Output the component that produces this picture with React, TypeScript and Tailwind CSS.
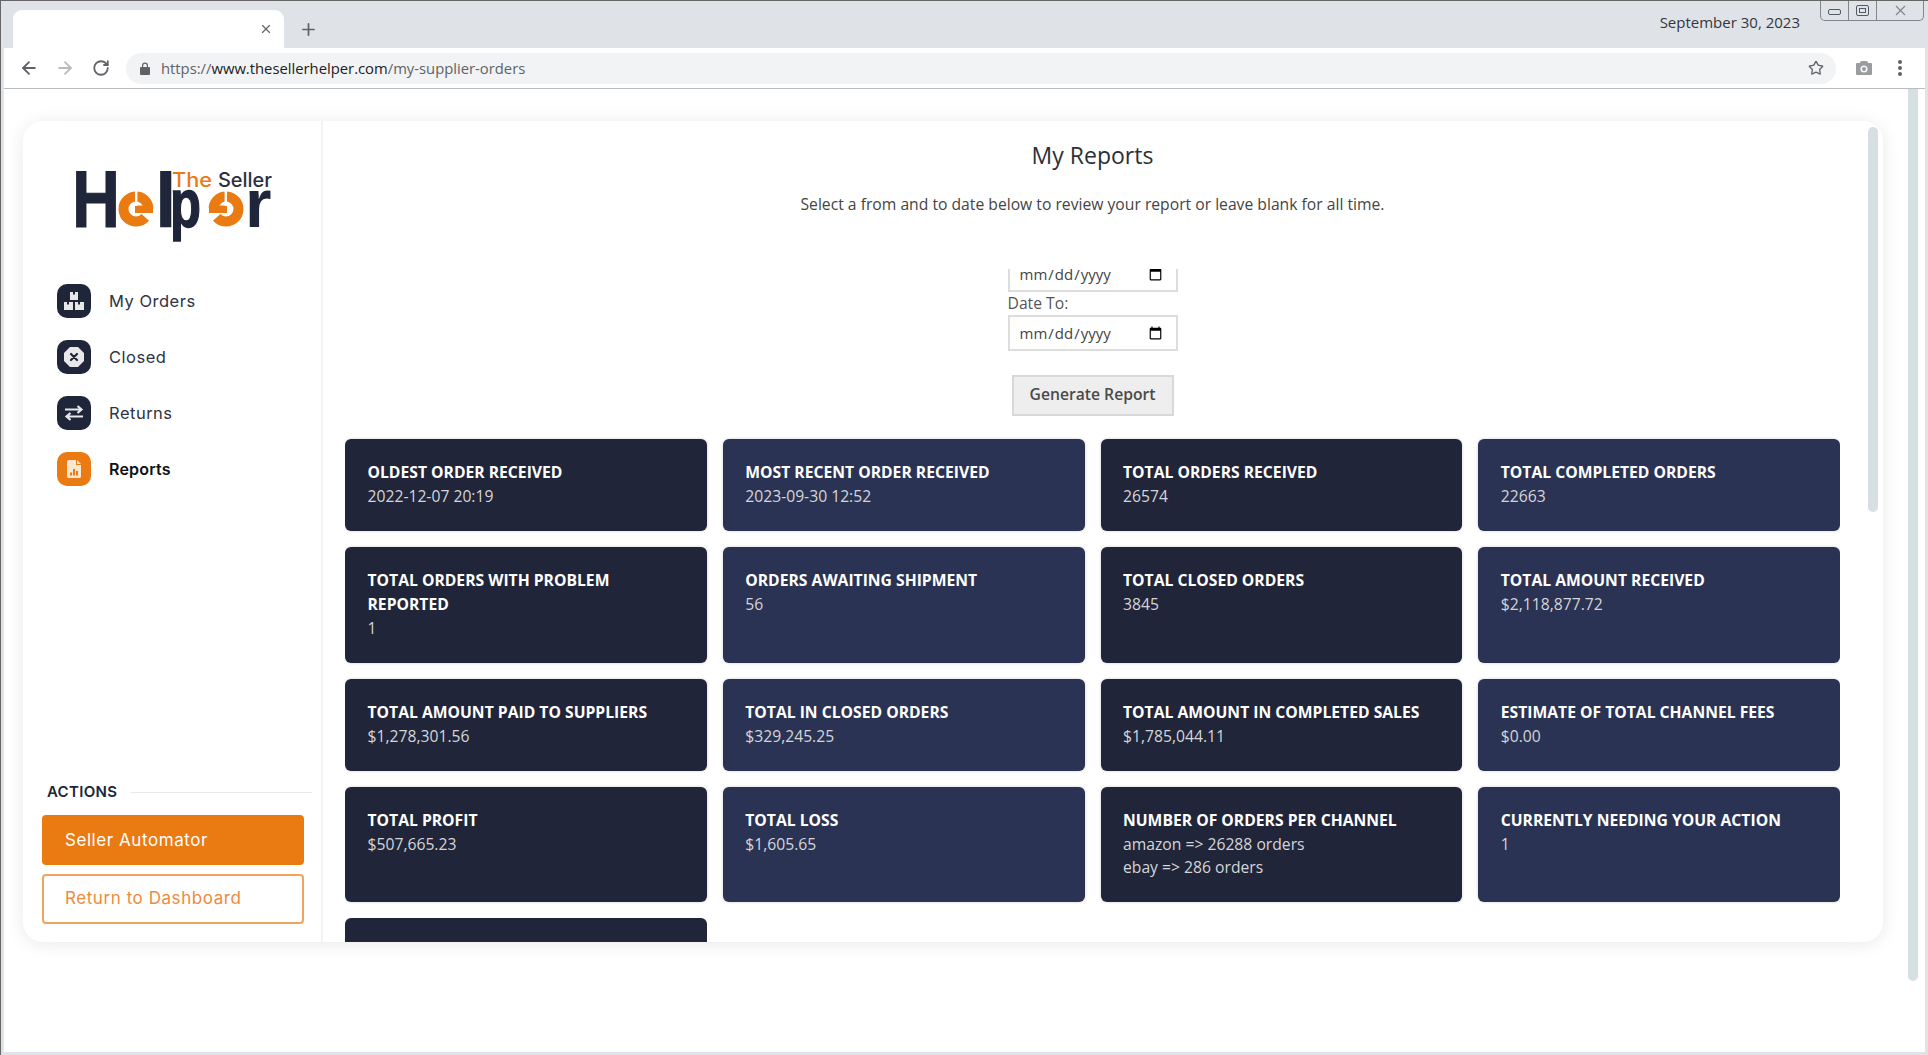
import React from "react";
import { ArrowLeft, ArrowRight, RotateCw, Star, X, Plus } from "lucide-react";

const cards: { t: string; v: string[]; dark: boolean }[] = [
  { t: "OLDEST ORDER RECEIVED", v: ["2022-12-07 20:19"], dark: true },
  { t: "MOST RECENT ORDER RECEIVED", v: ["2023-09-30 12:52"], dark: false },
  { t: "TOTAL ORDERS RECEIVED", v: ["26574"], dark: true },
  { t: "TOTAL COMPLETED ORDERS", v: ["22663"], dark: false },
  { t: "TOTAL ORDERS WITH PROBLEM REPORTED", v: ["1"], dark: true },
  { t: "ORDERS AWAITING SHIPMENT", v: ["56"], dark: false },
  { t: "TOTAL CLOSED ORDERS", v: ["3845"], dark: true },
  { t: "TOTAL AMOUNT RECEIVED", v: ["$2,118,877.72"], dark: false },
  { t: "TOTAL AMOUNT PAID TO SUPPLIERS", v: ["$1,278,301.56"], dark: true },
  { t: "TOTAL IN CLOSED ORDERS", v: ["$329,245.25"], dark: false },
  { t: "TOTAL AMOUNT IN COMPLETED SALES", v: ["$1,785,044.11"], dark: true },
  { t: "ESTIMATE OF TOTAL CHANNEL FEES", v: ["$0.00"], dark: false },
  { t: "TOTAL PROFIT", v: ["$507,665.23"], dark: true },
  { t: "TOTAL LOSS", v: ["$1,605.65"], dark: false },
  { t: "NUMBER OF ORDERS PER CHANNEL", v: ["amazon => 26288 orders", "ebay => 286 orders"], dark: true },
  { t: "CURRENTLY NEEDING YOUR ACTION", v: ["1"], dark: false },
];

function LogoE() {
  return (
    <g>
      <circle cx="61" cy="38" r="12.5" fill="none" stroke="#ea7a12" strokeWidth="10" strokeDasharray="68 10.5" transform="rotate(42 61 38)" />
      <rect x="60" y="34.5" width="18" height="7.5" fill="#ea7a12" />
      <rect x="60" y="19" width="2.4" height="16" fill="#ffffff" />
    </g>
  );
}

function Logo() {
  const sans = "'Liberation Sans', Arial, sans-serif";
  const dark = "#20263a";
  return (
    <svg width="210" height="80" viewBox="-5 0 210 80" className="block">
      <text x="-3" y="56" fontFamily={sans} fontWeight="700" fontSize="81" fill={dark} stroke={dark} strokeWidth="1" textLength="48" lengthAdjust="spacingAndGlyphs">H</text>
      <LogoE />
      <text x="79.5" y="56" fontFamily={sans} fontWeight="700" fontSize="81" fill={dark}>l</text>
      <text x="95" y="56" fontFamily={sans} fontWeight="700" fontSize="68" fill={dark} stroke={dark} strokeWidth="1.4" textLength="31" lengthAdjust="spacingAndGlyphs">p</text>
      <g transform="translate(212 0) scale(-1 1)">
        <LogoE />
      </g>
      <text x="170" y="56" fontFamily={sans} fontWeight="700" fontSize="68" fill={dark}>r</text>
      <text x="97" y="16" fontFamily="Inter, sans-serif" fontSize="19.5" fontWeight="500" fill="#ea7a12" textLength="40" lengthAdjust="spacingAndGlyphs">The</text>
      <text x="143" y="16" fontFamily="Inter, sans-serif" fontSize="19.5" fontWeight="500" fill="#2b3040" textLength="54" lengthAdjust="spacingAndGlyphs">Seller</text>
    </svg>
  );
}

function BoxesIcon() {
  return (
    <svg width="20" height="18" viewBox="0 0 20 18" fill="#e8e8ea">
      <path d="M6 0h3v2.5h2V0h3v8H6z" />
      <path d="M0 10h3v2.5h2V10h4v8H0z" />
      <path d="M11 10h3v2.5h2V10h4v8h-9z" />
    </svg>
  );
}
function ClosedIcon() {
  return (
    <svg width="20" height="20" viewBox="0 0 20 20">
      <path d="M6 0h8l6 6v8l-6 6H6l-6-6V6z" fill="#e8e8ea" />
      <path d="M7 7l6 6M13 7l-6 6" stroke="#20263a" strokeWidth="2.2" strokeLinecap="round" />
    </svg>
  );
}
function SwapIcon() {
  return (
    <svg width="20" height="16" viewBox="0 0 20 16" fill="none" stroke="#e8e8ea" strokeWidth="2.2">
      <path d="M1 4.5h16M13.5 1l4 3.5-4 3.5" />
      <path d="M19 11.5H3M6.5 8l-4 3.5 4 3.5" />
    </svg>
  );
}
function ReportIcon() {
  return (
    <svg width="14" height="18" viewBox="0 0 14 18">
      <path d="M0 1.5A1.5 1.5 0 0 1 1.5 0H9v5h5v11.5a1.5 1.5 0 0 1-1.5 1.5h-11A1.5 1.5 0 0 1 0 16.5z" fill="#fbe6d0" />
      <path d="M10 0l4 4h-4z" fill="#fbe6d0" />
      <rect x="3" y="12.5" width="2" height="3" fill="#ea7a12" />
      <rect x="6" y="9" width="2" height="6.5" fill="#ea7a12" />
      <rect x="9" y="11" width="2" height="4.5" fill="#ea7a12" />
    </svg>
  );
}

function NavItem({ icon, label, active }: { icon: React.ReactNode; label: string; active?: boolean }) {
  return (
    <div className="flex items-center h-[34px] gap-[18px]">
      <div className={active ? "w-[34px] h-[34px] rounded-[10px] bg-[#ea7a12] flex items-center justify-center" : "w-[34px] h-[34px] rounded-[10px] bg-[#20263a] flex items-center justify-center"}>
        {icon}
      </div>
      <span className={active ? "font-['Inter',sans-serif] text-[16px] font-semibold text-[#111] tracking-[0.2px]" : "font-['Inter',sans-serif] text-[16.5px] text-[#2f3342] tracking-[0.5px]"}>{label}</span>
    </div>
  );
}

export default function App() {
  return (
    <div className="w-[1928px] h-[1055px] bg-[#dfe3e8] border-t border-l border-[#666] flex flex-col overflow-hidden font-['Open_Sans',sans-serif]">
      {/* tab strip */}
      <div className="h-[47px] flex shrink-0">
        <div className="ml-[12px] mt-[9px] w-[271px] h-[38px] bg-white rounded-t-[9px] flex items-center justify-end pr-[11px]">
          <X size={14} strokeWidth={2} className="text-[#5f6368]" />
        </div>
        <div className="ml-[15px] mt-[19px] h-[18px]">
          <Plus size={19} strokeWidth={2.2} className="text-[#5f6368]" />
        </div>
        <div className="ml-auto mt-[11px] text-[15px] leading-[20px] text-[#33373d]">September 30, 2023</div>
        <div className="ml-[20px] mr-[4px] w-[104px] h-[20px] border border-t-0 border-[#80868c] rounded-b-[5px] flex text-[#555b62]">
          <div className="w-[28px] border-r border-[#80868c] flex items-center justify-center">
            <div className="w-[13px] h-[6px] border border-[#555b62] rounded-[2px] mt-[3px]" />
          </div>
          <div className="w-[28px] border-r border-[#80868c] flex items-center justify-center">
            <div className="w-[13px] h-[11px] border border-[#555b62] rounded-[2px] flex items-center justify-center">
              <div className="w-[7px] h-[5px] border border-[#555b62]" />
            </div>
          </div>
          <div className="flex-1 flex items-center justify-center">
            <X size={17} strokeWidth={1.5} className="text-[#7d8388]" />
          </div>
        </div>
      </div>

      {/* page frame */}
      <div className="flex-1 mx-[3px] mb-[3px] bg-white flex flex-col min-h-0">
        {/* toolbar */}
        <div className="h-[41px] shrink-0 border-b border-[#b9bcbf] flex items-center">
          <ArrowLeft size={20} strokeWidth={2.2} className="ml-[15px] text-[#5f6368]" />
          <ArrowRight size={20} strokeWidth={2.2} className="ml-[16px] text-[#b9bcbf]" />
          <RotateCw size={18} strokeWidth={2.4} className="ml-[17px] text-[#5f6368]" />
          <div className="ml-[16px] w-[1710px] h-[31px] rounded-full bg-[#f1f3f4] flex items-center">
            <svg width="10" height="13" viewBox="0 0 10 13" className="ml-[14px]">
              <path d="M2 5V3.5a3 3 0 0 1 6 0V5h1a1 1 0 0 1 1 1v6a1 1 0 0 1-1 1H1a1 1 0 0 1-1-1V6a1 1 0 0 1 1-1zm1.2 0h3.6V3.5a1.8 1.8 0 0 0-3.6 0z" fill="#5f6368" />
            </svg>
            <span className="ml-[11px] text-[14.8px] text-[#5f6368]">
              https://<span className="text-[#202124]">www.thesellerhelper.com</span>/my-supplier-orders
            </span>
            <Star size={16} strokeWidth={2} className="ml-auto mr-[12px] text-[#5f6368]" />
          </div>
          <svg width="16" height="14" viewBox="0 0 16 14" className="ml-[20px]">
            <path d="M5 0h6l1.2 2H15a1 1 0 0 1 1 1v10a1 1 0 0 1-1 1H1a1 1 0 0 1-1-1V3a1 1 0 0 1 1-1h2.8z" fill="#9a9da0" />
            <circle cx="8" cy="8" r="3.6" fill="#f4f4f4" />
            <circle cx="8" cy="8" r="2" fill="#9a9da0" />
          </svg>
          <div className="ml-[26px] flex flex-col gap-[2px]">
            <div className="w-[4px] h-[4px] rounded-full bg-[#5f6368]" />
            <div className="w-[4px] h-[4px] rounded-full bg-[#5f6368]" />
            <div className="w-[4px] h-[4px] rounded-full bg-[#5f6368]" />
          </div>
        </div>

        {/* content */}
        <div className="flex-1 flex items-start pl-[19px] pt-[32px] min-h-0">
          <div className="w-[1860px] h-[821px] flex rounded-[20px] bg-white shadow-[0_2px_18px_rgba(0,0,0,0.09)]">
            {/* sidebar */}
            <aside className="w-[300px] shrink-0 border-r-2 border-[#f3f3f3] flex flex-col">
              <div className="pl-[47px] pt-[50px] h-[163px]">
                <Logo />
              </div>
              <nav className="pl-[34px] flex flex-col gap-[22px]">
                <NavItem icon={<BoxesIcon />} label="My Orders" />
                <NavItem icon={<ClosedIcon />} label="Closed" />
                <NavItem icon={<SwapIcon />} label="Returns" />
                <NavItem icon={<ReportIcon />} label="Reports" active />
              </nav>
              <div className="mt-auto pl-[19px] pr-[9px] pb-[18px]">
                <div className="flex items-center pl-[5px] gap-[14px] h-[24px]">
                  <span className="font-['Inter',sans-serif] text-[15px] font-semibold text-[#20263a] tracking-[0.3px]">ACTIONS</span>
                  <div className="flex-1 h-px bg-[#e8eaec]" />
                </div>
                <div className="w-[262px] h-[50px] mt-[11px] pt-[2px] rounded-[4px] bg-[#ea7a12] flex items-center pl-[23px] font-['Inter',sans-serif] text-[17px] text-white tracking-[0.56px]">Seller Automator</div>
                <div className="w-[262px] h-[50px] mt-[9px] rounded-[4px] border-2 border-[#f2a45e] flex items-center pl-[21px] font-['Inter',sans-serif] text-[17px] text-[#ee8a3c] tracking-[0.56px]">Return to Dashboard</div>
              </div>
            </aside>

            {/* main */}
            <main className="flex-1 flex min-w-0">
              <div className="ml-[22px] w-[1495px] flex flex-col min-h-0">
                <div className="h-[148px] shrink-0 flex flex-col items-center">
                  <h1 className="mt-[18px] text-[23px] leading-[32px] text-[#2b2f38]">My Reports</h1>
                  <p className="mt-[21px] text-[15.7px] leading-[24px] text-[#444]">Select a from and to date below to review your report or leave blank for all time.</p>
                </div>
                <div className="flex-1 min-h-0 overflow-hidden">
                  <div className="flex flex-col items-center">
                    <div className="w-[170px] flex flex-col -mt-[13px]">
                      <input type="date" className="w-[170px] h-[36px] border-2 border-[#ddd] pl-[9px] pr-[11px] text-[15px] text-[#444] bg-white" />
                      <label className="h-[23px] text-[15.7px] leading-[23px] text-[#555]">Date To:</label>
                      <input type="date" className="w-[170px] h-[36px] border-2 border-[#ddd] pl-[9px] pr-[11px] text-[15px] text-[#444] bg-white" />
                    </div>
                    <button className="mt-[24px] w-[162px] h-[41px] pb-[1px] bg-[#eeeeee] border-2 border-[#d8d8d8] text-[15.7px] font-semibold text-[#4a4a4a]">Generate Report</button>
                  </div>
                  <div className="mt-[23px] grid grid-cols-4 gap-x-[16px] gap-y-[16px]">
                    {cards.map((c) => (
                      <div key={c.t} className={c.dark ? "rounded-[6px] bg-[#212539] pl-[22.5px] pr-[22px] pt-[21px] pb-[23px] shadow-[0_0_3px_rgba(0,0,0,0.2)]" : "rounded-[6px] bg-[#2a3353] pl-[22.5px] pr-[22px] pt-[21px] pb-[23px] shadow-[0_0_3px_rgba(0,0,0,0.2)]"}>
                        <div className="text-[15.7px] leading-[24px] font-bold text-white">{c.t}</div>
                        {c.v.map((v, i) => (
                          <div key={v} className={i === 1 ? "-mt-px text-[15.7px] leading-[24px] text-[#d5d5d8]" : "text-[15.7px] leading-[24px] text-[#d5d5d8]"}>{v}</div>
                        ))}
                      </div>
                    ))}
                    <div className="rounded-[6px] bg-[#212539] h-[92px]" />
                  </div>
                </div>
              </div>
              <div className="ml-[28px] mt-[6px] w-[10px] h-[385px] rounded-full bg-[#d6dfe2]" />
            </main>
          </div>
          <div className="ml-[25px] -mt-[32px] w-[10px] h-[892px] rounded-b-full bg-[#d6dfe2]" />
        </div>
      </div>
    </div>
  );
}
